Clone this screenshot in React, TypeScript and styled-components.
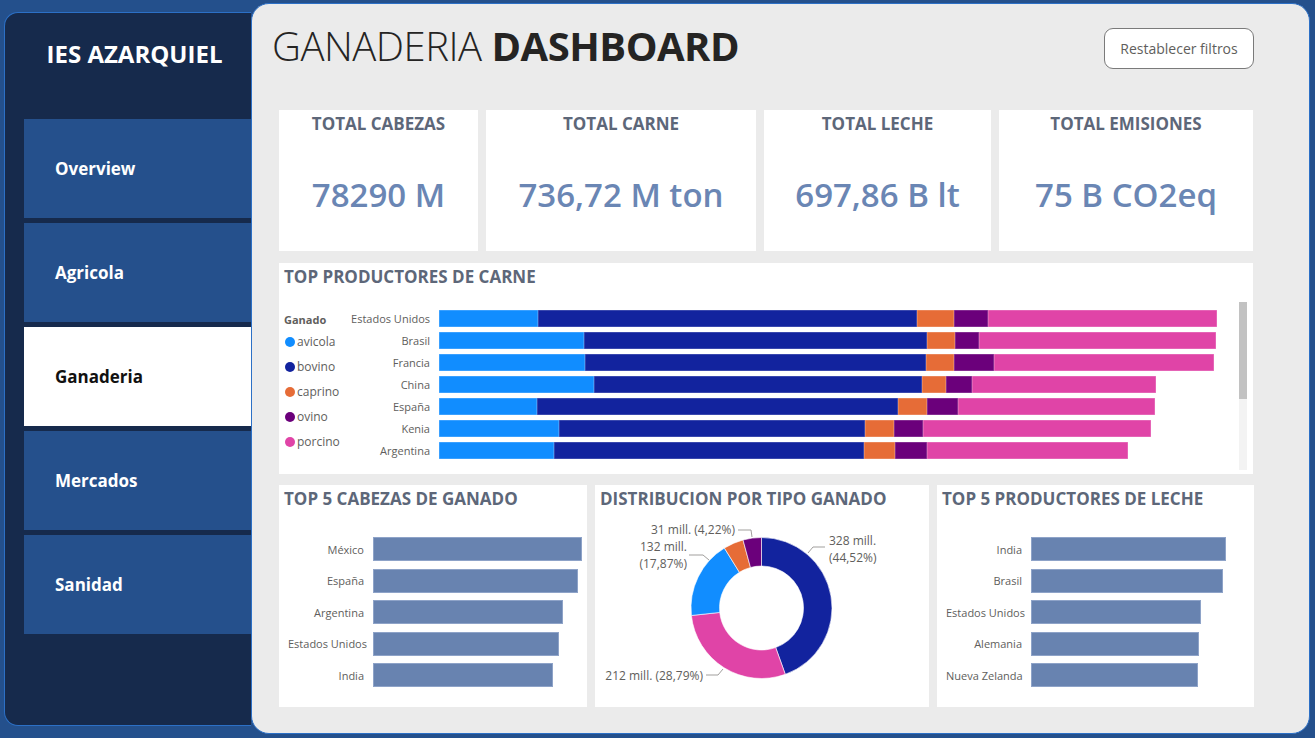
import React from 'react';
import styled, { createGlobalStyle } from 'styled-components';

const FONT = `"Open Sans", "Noto Sans", "Liberation Sans", sans-serif`;

const GlobalStyle = createGlobalStyle`
  html, body {
    margin: 0;
    padding: 0;
  }
  body {
    background: #24508c;
    font-family: ${FONT};
  }
  * {
    box-sizing: border-box;
  }
`;

const GANADO = [
  { key: 'avicola', color: '#118dff' },
  { key: 'bovino', color: '#12239e' },
  { key: 'caprino', color: '#e66c37' },
  { key: 'ovino', color: '#6b007b' },
  { key: 'porcino', color: '#e044a7' },
];

// segment widths in px, order: avicola, bovino, caprino, ovino, porcino
const CARNE = [
  { pais: 'Estados Unidos', seg: [99, 379, 37, 34, 229] },
  { pais: 'Brasil', seg: [145, 343, 28, 24, 237] },
  { pais: 'Francia', seg: [146, 341, 28, 40, 220] },
  { pais: 'China', seg: [155, 328, 24, 26, 184] },
  { pais: 'España', seg: [98, 361, 29, 31, 197] },
  { pais: 'Kenia', seg: [120, 306, 29, 29, 228] },
  { pais: 'Argentina', seg: [115, 310, 31, 32, 201] },
];

const CABEZAS = [
  { pais: 'México', w: 209 },
  { pais: 'España', w: 205 },
  { pais: 'Argentina', w: 190 },
  { pais: 'Estados Unidos', w: 186 },
  { pais: 'India', w: 180 },
];

const LECHE = [
  { pais: 'India', w: 195 },
  { pais: 'Brasil', w: 192 },
  { pais: 'Estados Unidos', w: 170 },
  { pais: 'Alemania', w: 168 },
  { pais: 'Nueva Zelanda', w: 167 },
];

const DONUT = [
  { color: '#12239e', pct: 44.52 },
  { color: '#e044a7', pct: 28.79 },
  { color: '#118dff', pct: 17.87 },
  { color: '#e66c37', pct: 4.6 },
  { color: '#6b007b', pct: 4.22 },
];

const NAV = ['Overview', 'Agricola', 'Ganaderia', 'Mercados', 'Sanidad'];

const KPIS = [
  { title: 'TOTAL CABEZAS', value: '78290 M' },
  { title: 'TOTAL CARNE', value: '736,72 M ton' },
  { title: 'TOTAL LECHE', value: '697,86 B lt' },
  { title: 'TOTAL EMISIONES', value: '75 B CO2eq' },
];

const pt = (cx: number, cy: number, r: number, deg: number) => {
  const a = (deg * Math.PI) / 180;
  return [cx + r * Math.sin(a), cy - r * Math.cos(a)];
};

const slicePath = (cx: number, cy: number, R: number, r: number, a0: number, a1: number) => {
  const large = a1 - a0 > 180 ? 1 : 0;
  const [x0, y0] = pt(cx, cy, R, a0);
  const [x1, y1] = pt(cx, cy, R, a1);
  const [x2, y2] = pt(cx, cy, r, a1);
  const [x3, y3] = pt(cx, cy, r, a0);
  return `M${x0} ${y0} A${R} ${R} 0 ${large} 1 ${x1} ${y1} L${x2} ${y2} A${r} ${r} 0 ${large} 0 ${x3} ${y3} Z`;
};

const Donut = () => {
  const total = DONUT.reduce((s, d) => s + d.pct, 0);
  let acc = 0;
  return (
    <DonutSvg width={334} height={195} viewBox="0 0 334 195">
      {DONUT.map((d) => {
        const a0 = (acc / total) * 360;
        acc += d.pct;
        const a1 = (acc / total) * 360;
        return <path key={d.color} d={slicePath(166.5, 96, 70.5, 42, a0, a1)} fill={d.color} stroke="#fff" strokeWidth={0.6} />;
      })}
      <g fill="none" stroke="#a19f9d" strokeWidth={1}>
        <polyline points="213,41 218,35 230,35" />
        <polyline points="143,18 156,18 157,25" />
        <polyline points="94,43 108,43 114,48" />
        <polyline points="111,163 123,163 128,157" />
      </g>
      <g fill="#605e5c" fontSize={12} fontFamily={FONT}>
        <text x={234} y={33}>328 mill.</text>
        <text x={234} y={50}>(44,52%)</text>
        <text x={140} y={22} textAnchor="end">31 mill. (4,22%)</text>
        <text x={92} y={39} textAnchor="end">132 mill.</text>
        <text x={92} y={56} textAnchor="end">(17,87%)</text>
        <text x={108} y={168} textAnchor="end">212 mill. (28,79%)</text>
      </g>
    </DonutSvg>
  );
};

const HBarChart = ({ rows }: { rows: { pais: string; w: number }[] }) => (
  <BarList>
    {rows.map((r) => (
      <BarRow key={r.pais}>
        <AxisLabel $width={85}>{r.pais}</AxisLabel>
        <Bar style={{ width: r.w }} />
      </BarRow>
    ))}
  </BarList>
);

const App = () => {
  return (
    <>
      <GlobalStyle />
      <Page>
        <Sidebar>
          <Logo>IES AZARQUIEL</Logo>
          <Nav>
            {NAV.map((item) => (
              <NavItem key={item} $active={item === 'Ganaderia'}>
                {item}
              </NavItem>
            ))}
          </Nav>
        </Sidebar>
        <Main>
          <Header>
            <Title>
              GANADERIA <strong>DASHBOARD</strong>
            </Title>
            <ResetButton>Restablecer filtros</ResetButton>
          </Header>
          <Content>
            <KpiRow>
              {KPIS.map((k) => (
                <KpiCard key={k.title}>
                  <CardTitle $center>{k.title}</CardTitle>
                  <KpiValue>{k.value}</KpiValue>
                </KpiCard>
              ))}
            </KpiRow>

            <CarneCard>
              <CardTitle>TOP PRODUCTORES DE CARNE</CardTitle>
              <CarneBody>
                <Legend>
                  <LegendTitle>Ganado</LegendTitle>
                  {GANADO.map((g) => (
                    <LegendItem key={g.key}>
                      <Dot $color={g.color} />
                      {g.key}
                    </LegendItem>
                  ))}
                </Legend>
                <StackList>
                  {CARNE.map((row) => (
                    <StackRow key={row.pais}>
                      <AxisLabel $width={89}>{row.pais}</AxisLabel>
                      <Stack>
                        {row.seg.map((w, i) => (
                          <Segment key={GANADO[i].key} $color={GANADO[i].color} style={{ width: w }} />
                        ))}
                      </Stack>
                    </StackRow>
                  ))}
                </StackList>
              </CarneBody>
              <ScrollTrack>
                <ScrollThumb />
              </ScrollTrack>
            </CarneCard>

            <BottomRow>
              <ChartCard>
                <CardTitle>TOP 5 CABEZAS DE GANADO</CardTitle>
                <HBarChart rows={CABEZAS} />
              </ChartCard>
              <ChartCard>
                <CardTitle>DISTRIBUCION POR TIPO GANADO</CardTitle>
                <Donut />
              </ChartCard>
              <ChartCard>
                <CardTitle>TOP 5 PRODUCTORES DE LECHE</CardTitle>
                <HBarChart rows={LECHE} />
              </ChartCard>
            </BottomRow>
          </Content>
        </Main>
      </Page>
    </>
  );
};

const Page = styled.div`
  width: 1315px;
  height: 738px;
  display: flex;
  align-items: flex-start;
  padding-left: 4px;
  overflow: hidden;
`;

const Sidebar = styled.aside`
  width: 247px;
  height: 714px;
  margin-top: 12px;
  background: #162a4c;
  border: 1px solid #2c70c6;
  border-right: none;
  border-radius: 14px 0 0 14px;
  display: flex;
  flex-direction: column;
  padding-left: 19px;
`;

const Logo = styled.div`
  height: 106px;
  padding-top: 25px;
  padding-right: 6px;
  text-align: center;
  color: #fff;
  font-size: 24px;
  line-height: 32px;
  font-weight: 700;
`;

const Nav = styled.nav`
  display: flex;
  flex-direction: column;
  gap: 5px;
`;

const NavItem = styled.div<{ $active?: boolean }>`
  height: 99px;
  display: flex;
  align-items: center;
  padding-left: 31px;
  background: ${(p) => (p.$active ? '#ffffff' : '#25508c')};
  color: ${(p) => (p.$active ? '#111' : '#fff')};
  font-size: 17px;
  font-weight: 700;
`;

const Main = styled.main`
  width: 1059px;
  height: 731px;
  margin-top: 3px;
  background: #ebebeb;
  border: 1px solid #2c70c6;
  border-radius: 18px;
  display: flex;
  flex-direction: column;
  padding: 0 56px 0 27px;
`;

const Header = styled.header`
  height: 106px;
  display: flex;
  justify-content: space-between;
  align-items: flex-start;
`;

const Title = styled.h1`
  margin: 17px 0 0 -7px;
  font-size: 40px;
  line-height: 50px;
  font-weight: 300;
  color: #252423;
  letter-spacing: -0.5px;

  strong {
    font-weight: 700;
  }
`;

const ResetButton = styled.button`
  margin-top: 24px;
  margin-right: -1px;
  width: 150px;
  height: 41px;
  background: #fff;
  border: 1px solid #7a7a7a;
  border-radius: 9px;
  font-family: ${FONT};
  font-size: 14px;
  color: #605e5c;
`;

const Content = styled.div`
  display: flex;
  flex-direction: column;
`;

const KpiRow = styled.div`
  height: 141px;
  display: grid;
  grid-template-columns: 199px 270px 227px 254px;
  column-gap: 8px;
`;

const Card = styled.section`
  background: #fff;
  position: relative;
`;

const KpiCard = styled(Card)`
  display: flex;
  flex-direction: column;
  align-items: center;
`;

const CardTitle = styled.h2<{ $center?: boolean }>`
  margin: 0;
  padding: ${(p) => (p.$center ? '1px 0 0' : '1px 0 0 5px')};
  text-align: ${(p) => (p.$center ? 'center' : 'left')};
  font-size: 17px;
  line-height: 26px;
  font-weight: 700;
  color: #5d6779;
  white-space: nowrap;
`;

const KpiValue = styled.div`
  margin-top: 38px;
  font-size: 33px;
  line-height: 40px;
  font-weight: 600;
  color: #6a86b4;
`;

const CarneCard = styled(Card)`
  height: 211px;
  margin-top: 12px;
`;

const CarneBody = styled.div`
  display: flex;
  padding: 20px 0 0 5px;
`;

const Legend = styled.div`
  width: 66px;
  padding-top: 2px;
  display: flex;
  flex-direction: column;
`;

const LegendTitle = styled.div`
  font-size: 11px;
  line-height: 16px;
  font-weight: 700;
  color: #605e5c;
  margin-bottom: 1px;
`;

const LegendItem = styled.div`
  display: flex;
  align-items: center;
  height: 25px;
  font-size: 12px;
  color: #605e5c;
`;

const Dot = styled.span<{ $color: string }>`
  width: 10px;
  height: 10px;
  border-radius: 50%;
  background: ${(p) => p.$color};
  margin: 0 2px 0 1px;
`;

const StackList = styled.div`
  display: flex;
  flex-direction: column;
  gap: 5px;
`;

const StackRow = styled.div`
  display: flex;
  align-items: center;
  height: 17px;
`;

const AxisLabel = styled.div<{ $width: number }>`
  width: ${(p) => p.$width}px;
  flex: none;
  padding-right: 9px;
  text-align: right;
  font-size: 11px;
  color: #605e5c;
  white-space: nowrap;
`;

const Stack = styled.div`
  display: flex;
  height: 17px;
`;

const Segment = styled.div<{ $color: string }>`
  height: 100%;
  background: ${(p) => p.$color};
  box-shadow: inset 0 0 0 0.5px rgba(255, 255, 255, 0.35);
`;

const ScrollTrack = styled.div`
  position: absolute;
  right: 6px;
  top: 39px;
  width: 8px;
  height: 168px;
  background: #f3f3f3;
`;

const ScrollThumb = styled.div`
  height: 97px;
  background: #c2c2c2;
`;

const BottomRow = styled.div`
  height: 221px;
  margin-top: 11px;
  display: grid;
  grid-template-columns: 308px 334px 317px;
  column-gap: 8px;
`;

const ChartCard = styled(Card)`
  display: flex;
  flex-direction: column;
`;

const BarList = styled.div`
  display: flex;
  flex-direction: column;
  gap: 7.5px;
  padding: 25px 0 0 9px;
`;

const BarRow = styled.div`
  display: flex;
  align-items: center;
  height: 24px;
`;

const Bar = styled.div`
  height: 24px;
  background: #6883b0;
  box-shadow: inset 0 0 0 1px #8ea3c8;
`;

const DonutSvg = styled.svg`
  display: block;
`;

export default App;
